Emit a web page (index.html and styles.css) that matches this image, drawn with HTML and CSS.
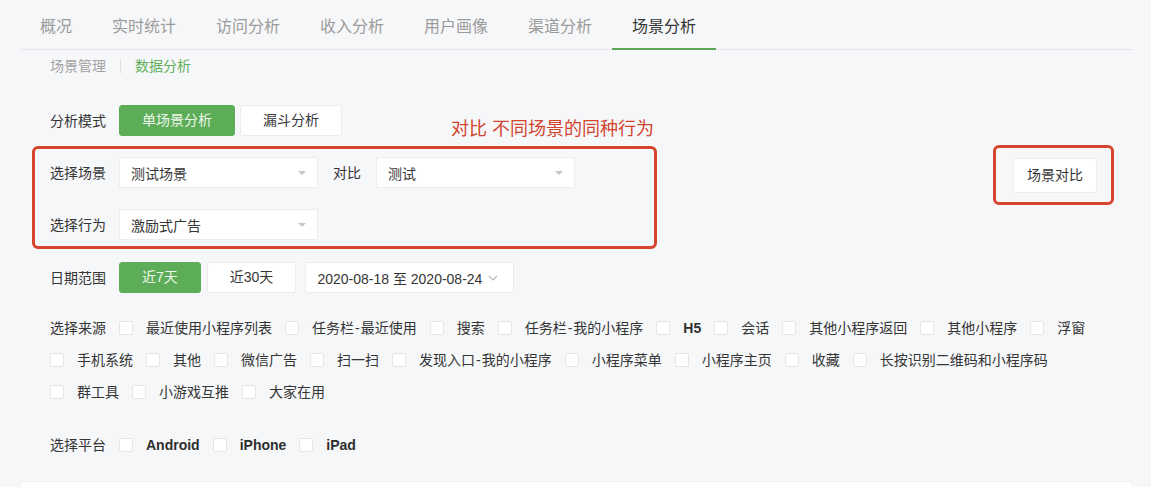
FILE: index.html
```html
<!DOCTYPE html>
<html lang="zh-CN">
<head>
<meta charset="utf-8">
<title>场景分析</title>
<link rel="stylesheet" href="styles.css">
</head>
<body>
<div class="page">
  <nav class="tabs">
    <div class="tab">概况</div>
    <div class="tab">实时统计</div>
    <div class="tab">访问分析</div>
    <div class="tab">收入分析</div>
    <div class="tab">用户画像</div>
    <div class="tab">渠道分析</div>
    <div class="tab active">场景分析</div>
  </nav>
  <div class="subnav">
    <span>场景管理</span><span class="sep"></span><span class="current">数据分析</span>
  </div>

  <div class="form">
    <div class="row mode">
      <span class="label">分析模式</span>
      <div class="btn primary">单场景分析</div>
      <div class="btn">漏斗分析</div>
    </div>

    <div class="compare">
      <div class="fields">
        <div class="row">
          <span class="label">选择场景</span>
          <div class="select"><span>测试场景</span><i class="caret"></i></div>
          <span class="label inline">对比</span>
          <div class="select"><span>测试</span><i class="caret"></i></div>
        </div>
        <div class="row">
          <span class="label">选择行为</span>
          <div class="select"><span>激励式广告</span><i class="caret"></i></div>
        </div>
      </div>
      <div class="btn btn-compare">场景对比</div>
    </div>

    <div class="row date">
      <span class="label">日期范围</span>
      <div class="btn primary">近7天</div>
      <div class="btn">近30天</div>
      <div class="range">
        <span>2020-08-18 至 2020-08-24</span>
        <svg class="chev" width="10" height="6" viewBox="0 0 10 6"><path d="M1 1l4 4 4-4" fill="none" stroke="#b4b4b4" stroke-width="1.1"/></svg>
      </div>
    </div>

    <div class="checks sources">
      <span class="label">选择来源</span>
      <label class="opt"><i class="cb"></i><span>最近使用小程序列表</span></label>
      <label class="opt"><i class="cb"></i><span>任务栏<span class="dash">-</span>最近使用</span></label>
      <label class="opt"><i class="cb"></i><span>搜索</span></label>
      <label class="opt"><i class="cb"></i><span>任务栏<span class="dash">-</span>我的小程序</span></label>
      <label class="opt"><i class="cb"></i><b>H5</b></label>
      <label class="opt"><i class="cb"></i><span>会话</span></label>
      <label class="opt"><i class="cb"></i><span>其他小程序返回</span></label>
      <label class="opt"><i class="cb"></i><span>其他小程序</span></label>
      <label class="opt"><i class="cb"></i><span>浮窗</span></label>
      <label class="opt"><i class="cb"></i><span>手机系统</span></label>
      <label class="opt"><i class="cb"></i><span>其他</span></label>
      <label class="opt"><i class="cb"></i><span>微信广告</span></label>
      <label class="opt"><i class="cb"></i><span>扫一扫</span></label>
      <label class="opt"><i class="cb"></i><span>发现入口<span class="dash">-</span>我的小程序</span></label>
      <label class="opt"><i class="cb"></i><span>小程序菜单</span></label>
      <label class="opt"><i class="cb"></i><span>小程序主页</span></label>
      <label class="opt"><i class="cb"></i><span>收藏</span></label>
      <label class="opt"><i class="cb"></i><span>长按识别二维码和小程序码</span></label>
      <label class="opt"><i class="cb"></i><span>群工具</span></label>
      <label class="opt"><i class="cb"></i><span>小游戏互推</span></label>
      <label class="opt"><i class="cb"></i><span>大家在用</span></label>
    </div>

    <div class="checks platform">
      <span class="label">选择平台</span>
      <label class="opt"><i class="cb"></i><b>Android</b></label>
      <label class="opt"><i class="cb"></i><b>iPhone</b></label>
      <label class="opt"><i class="cb"></i><b>iPad</b></label>
    </div>

    <div class="note-text">对比 不同场景的同种行为</div>
    <div class="note-box note-fields"></div>
    <div class="note-box note-button"></div>
  </div>

  <div class="card"></div>
</div>
</body>
</html>
```
FILE: styles.css
```css
* { box-sizing: border-box; margin: 0; padding: 0; }
html, body { background: #f6f7f9; }
body {
  font-family: "Liberation Sans", "Noto Sans CJK SC", sans-serif;
  font-size: 14px;
  color: #353535;
  overflow: hidden;
}
.page { padding: 0 18px 0 20px; }

.tabs { display: flex; border-bottom: 1px solid #e4e6ea; }
.tab {
  padding: 15px 20px 9px;
  line-height: 24px;
  font-size: 16px;
  color: #9b9b9b;
  border-bottom: 2px solid transparent;
  margin-bottom: -1px;
}
.tab.active { color: #353535; border-bottom-color: #5aa855; }

.subnav {
  display: flex;
  align-items: center;
  margin-top: 6px;
  padding-left: 30px;
  line-height: 20px;
  color: #a3a3a3;
}
.subnav .sep { width: 1px; height: 14px; background: #dedede; margin: 0 14px; }
.subnav .current { color: #62b05c; }

.form { position: relative; padding: 29px 30px 0; }
.row { display: flex; align-items: center; }
.label { margin-right: 13px; line-height: 20px; white-space: nowrap; color: #353535; }
.label.inline { margin: 0 15px; }

.btn {
  height: 31px;
  line-height: 29px;
  padding: 0 22px;
  border: 1px solid #ececec;
  background: #fff;
  border-radius: 3px;
  margin-right: 5px;
  white-space: nowrap;
}
.btn.primary { background: #5dad58; border-color: #5dad58; color: #eef7ec; }

.compare { display: flex; margin-top: 21px; }
.fields { display: flex; flex-direction: column; gap: 21px; }
.select {
  width: 199px;
  height: 31px;
  background: #fff;
  border: 1px solid #ececec;
  border-radius: 2px;
  display: flex;
  align-items: center;
  justify-content: space-between;
  padding: 0 11px;
}
.caret {
  width: 0;
  height: 0;
  border-left: 4px solid transparent;
  border-right: 4px solid transparent;
  border-top: 4px solid #c6c6c6;
}
.btn-compare {
  margin-left: auto;
  margin-top: 1px;
  margin-right: 6px;
  height: 35px;
  line-height: 33px;
  padding: 0 13px;
}

.date { margin-top: 22px; }
.date .btn { margin-right: 6px; }
.range {
  margin-left: 3px;
  width: 209px;
  height: 31px;
  background: #fff;
  border: 1px solid #ececec;
  border-radius: 3px;
  display: flex;
  align-items: center;
  justify-content: space-between;
  padding: 0 15px 0 11px;
}

.checks {
  display: flex;
  flex-wrap: wrap;
  align-items: center;
  column-gap: 13px;
  line-height: 32px;
}
.checks .label { margin-right: 0; }
.sources { margin-top: 19px; }
.platform { margin-top: 21px; }
.opt { display: flex; align-items: center; white-space: nowrap; }
.opt b { font-weight: 700; color: #2e2e2e; }
.cb {
  width: 14px;
  height: 14px;
  background: #fff;
  border: 1px solid #e6e6e6;
  border-radius: 2px;
  margin-right: 13px;
}
.dash { margin: 0 1px; }

.note-text {
  position: absolute;
  left: 431px;
  top: 41px;
  font-size: 18px;
  line-height: 24px;
  color: #d2442e;
  white-space: nowrap;
}
.note-box {
  position: absolute;
  border: 3px solid #d5452f;
  border-radius: 6px;
}
.note-fields { left: 12px; top: 70px; width: 625px; height: 103px; }
.note-button { left: 973px; top: 69px; width: 121px; height: 60px; }

.card {
  margin-top: 20px;
  height: 60px;
  background: #fff;
  border: 1px solid #eef0f2;
  border-radius: 4px;
}
```
